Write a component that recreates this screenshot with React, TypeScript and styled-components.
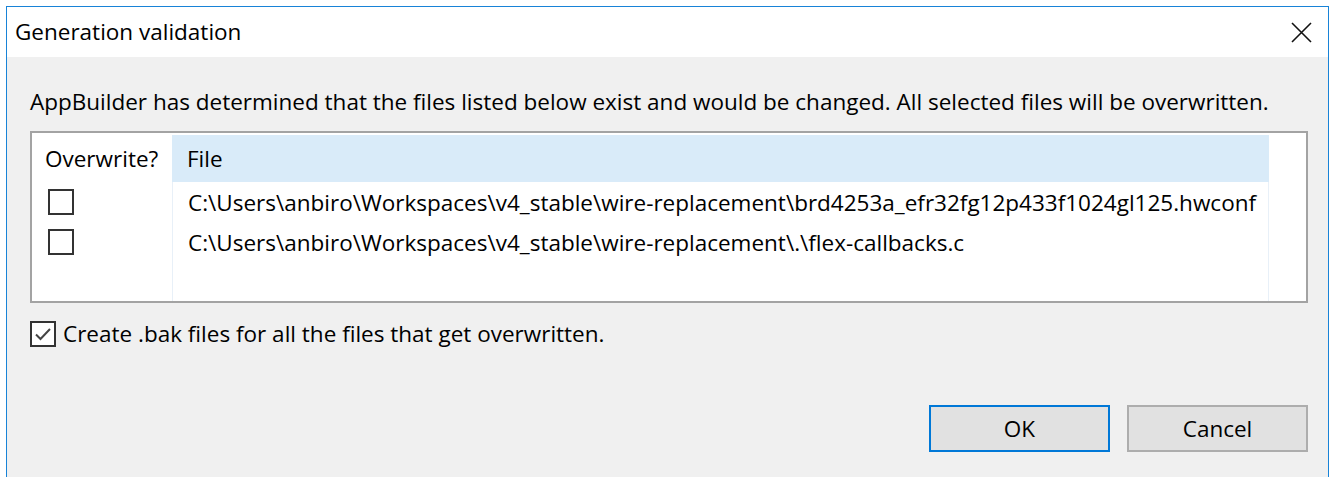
import React from 'react';
import styled, { createGlobalStyle } from 'styled-components';

const GlobalStyle = createGlobalStyle`
    html, body {
        margin: 0;
        padding: 0;
        background: #ffffff;
        overflow: hidden;
    }
    body {
        font-family: "Open Sans", "Noto Sans", "Liberation Sans", sans-serif;
        font-size: 22.5px;
        color: #000000;
    }
`;

const files = [
    'C:\\Users\\anbiro\\Workspaces\\v4_stable\\wire-replacement\\brd4253a_efr32fg12p433f1024gl125.hwconf',
    'C:\\Users\\anbiro\\Workspaces\\v4_stable\\wire-replacement\\.\\flex-callbacks.c',
];

export default function App(): JSX.Element {
    return (
        <>
            <GlobalStyle />
            <Window>
                <TitleBar>
                    <Title>Generation validation</Title>
                    <CloseButton aria-label="Close">
                        <svg width="21" height="21" viewBox="0 0 21 21">
                            <path d="M1 1 L20 20 M20 1 L1 20" stroke="#111" strokeWidth="1.6" fill="none" />
                        </svg>
                    </CloseButton>
                </TitleBar>
                <Body>
                    <Message>
                        AppBuilder has determined that the files listed below exist and would be changed. All selected files will be overwritten.
                    </Message>
                    <ListBox>
                        <ListGrid>
                            <HeaderCell>Overwrite?</HeaderCell>
                            <HeaderCell $active>File</HeaderCell>
                            <HeaderCell />
                            {files.map((f) => (
                                <React.Fragment key={f}>
                                    <CheckCell>
                                        <CheckBox />
                                    </CheckCell>
                                    <PathCell>{f}</PathCell>
                                    <FillerCell />
                                </React.Fragment>
                            ))}
                            <CheckCell />
                            <PathCell />
                            <FillerCell />
                        </ListGrid>
                    </ListBox>
                    <OptionRow>
                        <CheckBox>
                            <svg width="20" height="20" viewBox="0 0 20 20">
                                <path d="M3 10.5 L7.5 15 L17 5" stroke="#444" strokeWidth="2" fill="none" />
                            </svg>
                        </CheckBox>
                        <span>Create .bak files for all the files that get overwritten.</span>
                    </OptionRow>
                    <ButtonRow>
                        <DialogButton $primary>OK</DialogButton>
                        <DialogButton>Cancel</DialogButton>
                    </ButtonRow>
                </Body>
            </Window>
        </>
    );
}

const Window = styled.div`
    margin: 6px 1px 0 6px;
    height: 480px;
    border: 1px solid #1883d7;
    border-bottom: none;
    display: flex;
    flex-direction: column;
    background: #f0f0f0;
`;

const TitleBar = styled.div`
    height: 50px;
    background: #ffffff;
    display: flex;
    align-items: center;
    justify-content: space-between;
    padding: 0 16px 0 8px;
`;

const Title = styled.div`
    line-height: 26px;
`;

const CloseButton = styled.div`
    width: 21px;
    height: 21px;
    display: flex;
`;

const Body = styled.div`
    flex: 1;
    display: flex;
    flex-direction: column;
    padding: 32px 20px 0 23px;
`;

const Message = styled.div`
    line-height: 26px;
    white-space: nowrap;
`;

const ListBox = styled.div`
    margin-top: 16px;
    height: 166px;
    border: 2px solid #a3a3a3;
    background: #ffffff;
    padding-top: 2px;
    overflow: hidden;
`;

const ListGrid = styled.div`
    display: grid;
    grid-template-columns: 140px 1097px 1fr;
    grid-template-rows: 47px 40px 40px 1fr;
    height: 100%;
`;

const HeaderCell = styled.div<{ $active?: boolean }>`
    display: flex;
    align-items: center;
    padding-left: ${(p) => (p.$active ? '15px' : '13px')};
    background: ${(p) => (p.$active ? '#d9ebf9' : '#ffffff')};
`;

const CheckCell = styled.div`
    display: flex;
    align-items: center;
    padding-left: 16px;
`;

const PathCell = styled.div`
    display: flex;
    align-items: center;
    padding-left: 15px;
    white-space: nowrap;
    border-left: 1px solid #e8f0f8;
    border-right: 1px solid #e8f0f8;
`;

const FillerCell = styled.div``;

const CheckBox = styled.div`
    width: 22px;
    height: 22px;
    border: 2px solid #333333;
    background: #ffffff;
    display: flex;
    align-items: center;
    justify-content: center;
    flex-shrink: 0;
`;

const OptionRow = styled.div`
    margin-top: 18px;
    display: flex;
    align-items: center;
    gap: 7px;
    line-height: 26px;
`;

const ButtonRow = styled.div`
    margin-top: 58px;
    display: flex;
    justify-content: flex-end;
    gap: 17px;
`;

const DialogButton = styled.div<{ $primary?: boolean }>`
    width: 177px;
    height: 43px;
    display: flex;
    align-items: center;
    justify-content: center;
    background: #e1e1e1;
    border: 2px solid ${(p) => (p.$primary ? '#0078d7' : '#adadad')};
`;
